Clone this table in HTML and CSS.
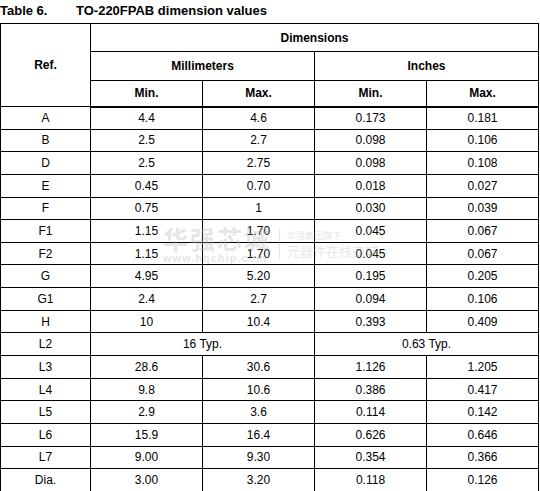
FILE: index.html
```html
<!DOCTYPE html>
<html lang="en">
<head>
  <meta charset="UTF-8">
  <title>TO-220FPAB dimension values</title>
  <link rel="stylesheet" href="styles.css">
</head>
<body>
  <div class="caption">
    <span class="caption-num">Table 6.</span>
    <span class="caption-title">TO-220FPAB dimension values</span>
  </div>
  <div class="sheet">
    <table class="dims">
      <thead>
        <tr class="h1">
          <th rowspan="3" class="ref">Ref.</th>
          <th colspan="4">Dimensions</th>
        </tr>
        <tr class="h2">
          <th colspan="2">Millimeters</th>
          <th colspan="2">Inches</th>
        </tr>
        <tr class="h3">
          <th>Min.</th>
          <th>Max.</th>
          <th>Min.</th>
          <th>Max.</th>
        </tr>
      </thead>
      <tbody>
        <tr><td>A</td><td>4.4</td><td>4.6</td><td>0.173</td><td>0.181</td></tr>
        <tr><td>B</td><td>2.5</td><td>2.7</td><td>0.098</td><td>0.106</td></tr>
        <tr><td>D</td><td>2.5</td><td>2.75</td><td>0.098</td><td>0.108</td></tr>
        <tr><td>E</td><td>0.45</td><td>0.70</td><td>0.018</td><td>0.027</td></tr>
        <tr><td>F</td><td>0.75</td><td>1</td><td>0.030</td><td>0.039</td></tr>
        <tr><td>F1</td><td>1.15</td><td>1.70</td><td>0.045</td><td>0.067</td></tr>
        <tr><td>F2</td><td>1.15</td><td>1.70</td><td>0.045</td><td>0.067</td></tr>
        <tr><td>G</td><td>4.95</td><td>5.20</td><td>0.195</td><td>0.205</td></tr>
        <tr><td>G1</td><td>2.4</td><td>2.7</td><td>0.094</td><td>0.106</td></tr>
        <tr><td>H</td><td>10</td><td>10.4</td><td>0.393</td><td>0.409</td></tr>
        <tr><td>L2</td><td colspan="2">16 Typ.</td><td colspan="2">0.63 Typ.</td></tr>
        <tr><td>L3</td><td>28.6</td><td>30.6</td><td>1.126</td><td>1.205</td></tr>
        <tr><td>L4</td><td>9.8</td><td>10.6</td><td>0.386</td><td>0.417</td></tr>
        <tr><td>L5</td><td>2.9</td><td>3.6</td><td>0.114</td><td>0.142</td></tr>
        <tr><td>L6</td><td>15.9</td><td>16.4</td><td>0.626</td><td>0.646</td></tr>
        <tr><td>L7</td><td>9.00</td><td>9.30</td><td>0.354</td><td>0.366</td></tr>
        <tr><td>Dia.</td><td>3.00</td><td>3.20</td><td>0.118</td><td>0.126</td></tr>
      </tbody>
    </table>

    <!-- watermark -->
    <div class="watermark">
      <div class="wm-left">
        <div class="wm-brand">华强芯城</div>
        <div class="wm-url">www.hqchip.com</div>
      </div>
      <div class="wm-right">
        <div class="wm-small">华强集团旗下</div>
        <div class="wm-big">元器件在线商城</div>
      </div>
    </div>
  </div>
</body>
</html>
```

FILE: styles.css
```css
* {
  box-sizing: border-box;
}
body {
  margin: 0;
  background: #fff;
  color: #000;
  font-family: "Liberation Sans", Arial, sans-serif;
}
.caption {
  display: flex;
  height: 23px;
  padding-top: 4px;
  font-size: 13px;
  font-weight: bold;
  line-height: 14px;
}
.caption-num {
  width: 76px;
}
.sheet {
  position: relative;
  width: 539px;
}
.dims {
  width: 539px;
  border-collapse: collapse;
  table-layout: fixed;
  font-size: 12px;
}
.dims th,
.dims td {
  border: 1px solid #000;
  text-align: center;
  padding: 0;
}
.dims th {
  font-weight: bold;
}
.dims th.ref {
  width: 90px;
}
.h1 th {
  height: 28px;
}
.h2 th {
  height: 29px;
}
.h3 th {
  height: 26px;
  border-bottom: 2px solid #000;
}
.dims td {
  height: 22.65px;
  line-height: 14px;
}

/* Watermark over the table */
.watermark {
  position: absolute;
  left: 163px;
  top: 201px;
  display: flex;
  align-items: center;
  gap: 8px;
  pointer-events: none;
  color: rgba(180, 180, 180, 0.35);
  font-family: "Noto Sans CJK SC", sans-serif;
}
.wm-brand {
  font-size: 25px;
  font-weight: bold;
  line-height: 28px;
  letter-spacing: 2px;
}
.wm-url {
  font-family: "Liberation Sans", Arial, sans-serif;
  font-size: 11px;
  font-weight: bold;
  line-height: 12px;
  letter-spacing: 1px;
}
.wm-right {
  border-left: 1px solid rgba(180, 180, 180, 0.35);
  padding-left: 7px;
}
.wm-small {
  font-size: 9px;
  line-height: 13px;
}
.wm-big {
  font-size: 13px;
  line-height: 17px;
}
```
